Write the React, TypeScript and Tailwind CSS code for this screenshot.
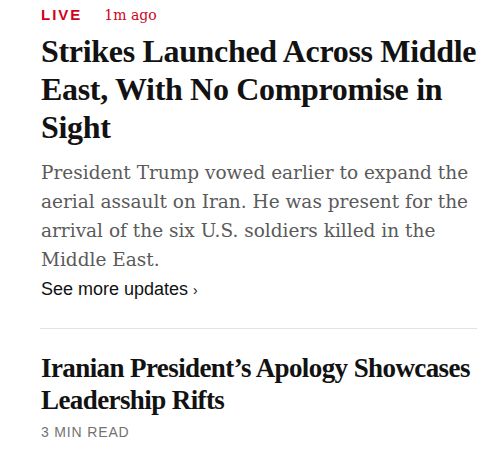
import React from 'react';

const serif = "font-['Liberation_Serif','Times_New_Roman',serif]";
const body = "font-['DejaVu_Serif',Georgia,serif]";
const sans = "font-['Liberation_Sans',Arial,sans-serif]";

export default function App() {
    return (
        <div className="w-[487px] h-[464px] bg-white overflow-hidden">
            <div className="pl-[41px] pr-[10px] pt-[4px]">
                <div className="flex items-baseline gap-[22px] h-[22px]">
                    <span className={`${sans} text-[15px] font-bold tracking-[2px] text-[#d0021b]`}>LIVE</span>
                    <span className={`${body} text-[14px] text-[#d0021b]`}>1m ago</span>
                </div>
                <h1 className={`${serif} mt-[6px] text-[32px] leading-[38px] font-bold text-[#121212] tracking-[-0.01em]`}>
                    Strikes Launched Across Middle East, With No Compromise in Sight
                </h1>
                <p className={`${body} mt-[12px] text-[18.5px] leading-[29px] text-[#5a5a5a]`}>
                    President Trump vowed earlier to expand the aerial assault on Iran. He was present for the arrival of the six U.S. soldiers killed in the Middle East.
                </p>
                <div className={`${sans} mt-[4px] text-[18px] leading-[22px] text-[#121212]`}>
                    See more updates <span className="text-[14px]">›</span>
                </div>
                <div className="mt-[27px] h-px bg-[#e2e2e2] -ml-px w-[437px]" />
                <h2 className={`${serif} mt-[23px] text-[27px] leading-[32px] font-bold text-[#121212] tracking-[-0.022em]`}>
                    Iranian President’s Apology Showcases Leadership Rifts
                </h2>
                <div className={`${sans} mt-[6px] text-[14px] tracking-[0.06em] text-[#727272]`}>3 MIN READ</div>
            </div>
        </div>
    );
}
